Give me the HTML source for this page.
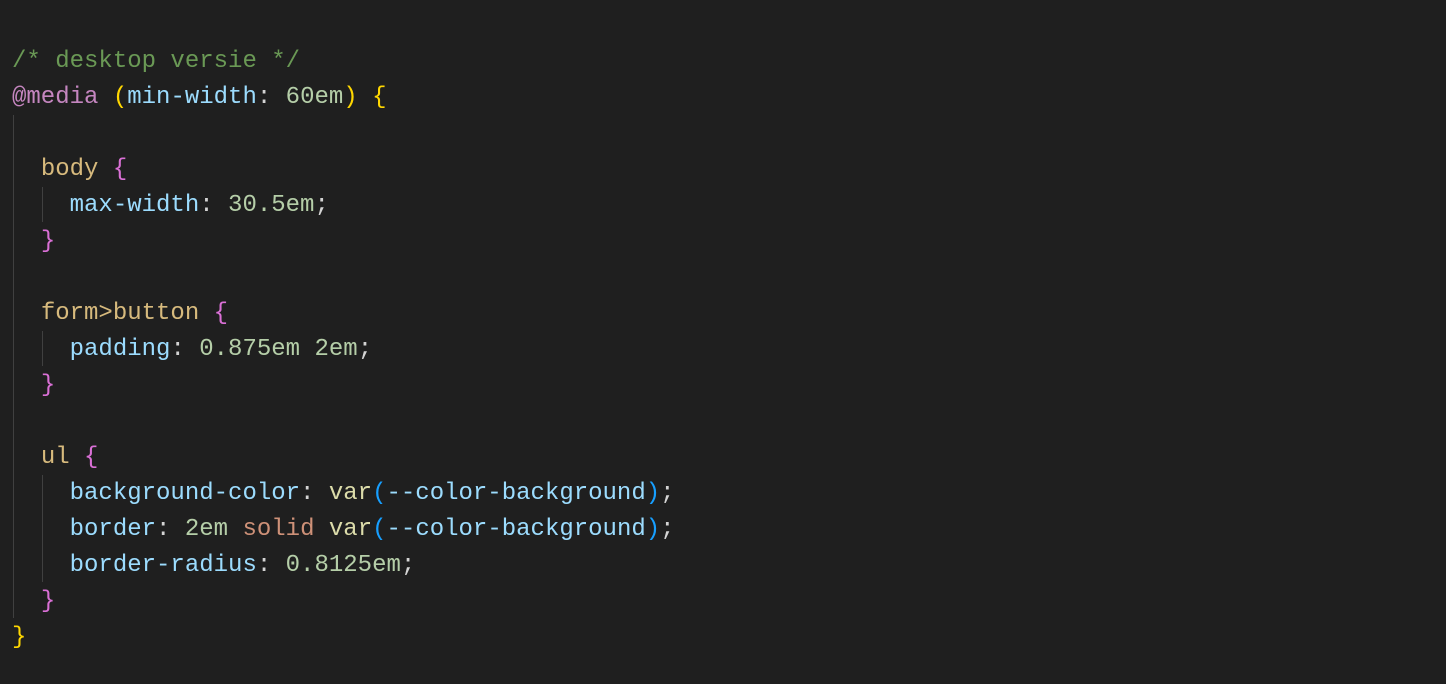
<!DOCTYPE html><html><head><style>
html,body{margin:0;background:#1f1f1f;width:1446px;height:684px;overflow:hidden}
pre{margin:0;position:absolute;left:12px;top:44px;font-family:"Liberation Mono",monospace;font-size:24px;line-height:36px;color:#d4d4d4}
.c{color:#6a9955}.at{color:#c586c0}.y{color:#ffd700}.p{color:#9cdcfe}.n{color:#b5cea8}.s{color:#d7ba7d}.b{color:#da70d6}.k{color:#ce9178}.f{color:#dcdcaa}.bl{color:#179fff}
.g{position:absolute;width:1px;background:#404040}
</style></head><body>
<div class="g" style="left:13px;top:115px;height:503px"></div>
<div class="g" style="left:42px;top:187px;height:35px"></div>
<div class="g" style="left:42px;top:331px;height:35px"></div>
<div class="g" style="left:42px;top:475px;height:107px"></div>
<pre><span class="c">/* desktop versie */</span>
<span class="at">@media</span> <span class="y">(</span><span class="p">min-width</span>: <span class="n">60em</span><span class="y">)</span> <span class="y">{</span>

  <span class="s">body</span> <span class="b">{</span>
    <span class="p">max-width</span>: <span class="n">30.5em</span>;
  <span class="b">}</span>

  <span class="s">form&gt;button</span> <span class="b">{</span>
    <span class="p">padding</span>: <span class="n">0.875em</span> <span class="n">2em</span>;
  <span class="b">}</span>

  <span class="s">ul</span> <span class="b">{</span>
    <span class="p">background-color</span>: <span class="f">var</span><span class="bl">(</span><span class="p">--color-background</span><span class="bl">)</span>;
    <span class="p">border</span>: <span class="n">2em</span> <span class="k">solid</span> <span class="f">var</span><span class="bl">(</span><span class="p">--color-background</span><span class="bl">)</span>;
    <span class="p">border-radius</span>: <span class="n">0.8125em</span>;
  <span class="b">}</span>
<span class="y">}</span></pre>
</body></html>
